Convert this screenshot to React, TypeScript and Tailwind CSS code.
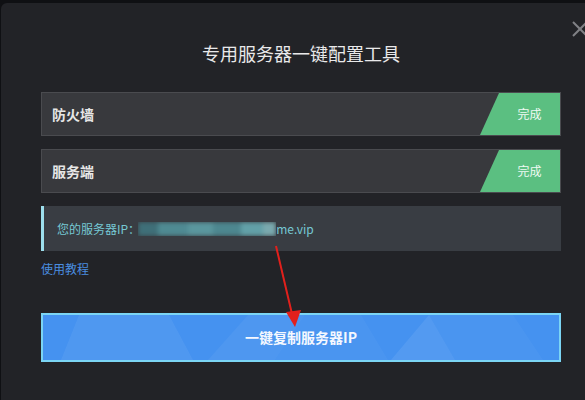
import React from "react";

const FONT = "font-['Noto_Sans_CJK_SC','Noto_Sans',sans-serif]";

function StatusRow({ label }: { label: string }) {
  return (
    <div className="flex h-[44px] items-stretch justify-between border border-[#4a4b4f] bg-[#38393d]">
      <div className="flex items-center pl-[10px] text-[14px] font-bold text-[#e6e6e6]">{label}</div>
      <div className="flex w-[80px] items-center justify-center bg-[#5bbf81] pl-[19px] text-[12px] text-[#eefaf2] [clip-path:polygon(19px_0,100%_0,100%_100%,0_100%)]">
        完成
      </div>
    </div>
  );
}

export default function App() {
  return (
    <div className={`relative h-[400px] w-[585px] overflow-hidden bg-[#0f1013] ${FONT}`}>
      <div className="ml-[1px] mt-[3px] flex h-[397px] w-[600px] flex-col rounded-tl-[6px] bg-[#222327] pl-[40px] pt-[40px]">
        <div className="flex h-[20px] w-[520px] items-center justify-center text-[18px] leading-[20px] text-[#e9e9ea]">
          专用服务器一键配置工具
        </div>

        <div className="mt-[29px] flex w-[520px] flex-col gap-[13px]">
          <StatusRow label="防火墙" />
          <StatusRow label="服务端" />
          <div className="flex h-[45px] items-center border-l-[3px] border-[#9ddfed] bg-[#393d43] pl-[13px] text-[12px] text-[#76c8d3]">
            <span>您的服务器IP：</span>
            <span className="relative ml-[-2px] inline-block h-[14px] w-[138px] overflow-hidden">
              <span className="absolute inset-0 flex blur-[2px]">
                <span className="h-full w-[20px] bg-[#3f6f78]" />
                <span className="h-full w-[30px] bg-[#4f8a92]" />
                <span className="h-full w-[25px] bg-[#5a969d]" />
                <span className="h-full w-[28px] bg-[#4d878f]" />
                <span className="h-full w-[22px] bg-[#62a0a7]" />
                <span className="h-full w-[13px] bg-[#7aa9ae]" />
              </span>
            </span>
            <span>me.vip</span>
          </div>
        </div>

        <div className="mt-[10px] h-[16px] text-[12px] leading-[16px] text-[#4a8ee0]">使用教程</div>

        <div className="relative mt-[36px] flex h-[49px] w-[520px] items-center justify-center overflow-hidden border-2 border-[#7bd5f4] bg-[#4592f0]">
          <svg className="absolute inset-0 h-full w-full" viewBox="0 0 516 45" preserveAspectRatio="none">
            <polygon points="18,45 36,0 126,0 150,45" fill="#ffffff" fillOpacity="0.06" />
            <polygon points="165,45 205,0 262,0 232,45" fill="#ffffff" fillOpacity="0.05" />
            <polygon points="232,45 262,0 318,0 345,45" fill="#ffffff" fillOpacity="0.03" />
            <polygon points="348,45 386,0 412,45" fill="#ffffff" fillOpacity="0.08" />
            <polygon points="412,45 386,0 470,0 500,45" fill="#ffffff" fillOpacity="0.03" />
          </svg>
          <span className="relative text-[14px] font-bold text-[#f4f8ff]">一键复制服务器IP</span>
        </div>
      </div>

      <svg className="pointer-events-none absolute left-0 top-0" width="585" height="400" viewBox="0 0 585 400">
        <line x1="573" y1="22" x2="587" y2="36" stroke="#808185" strokeWidth="2" />
        <line x1="587" y1="22" x2="573" y2="36" stroke="#808185" strokeWidth="2" />
        <line x1="276" y1="246" x2="292" y2="314" stroke="#e1201c" strokeWidth="2" />
        <polygon points="286,312 301,310 295,327" fill="#e1201c" />
      </svg>
    </div>
  );
}
